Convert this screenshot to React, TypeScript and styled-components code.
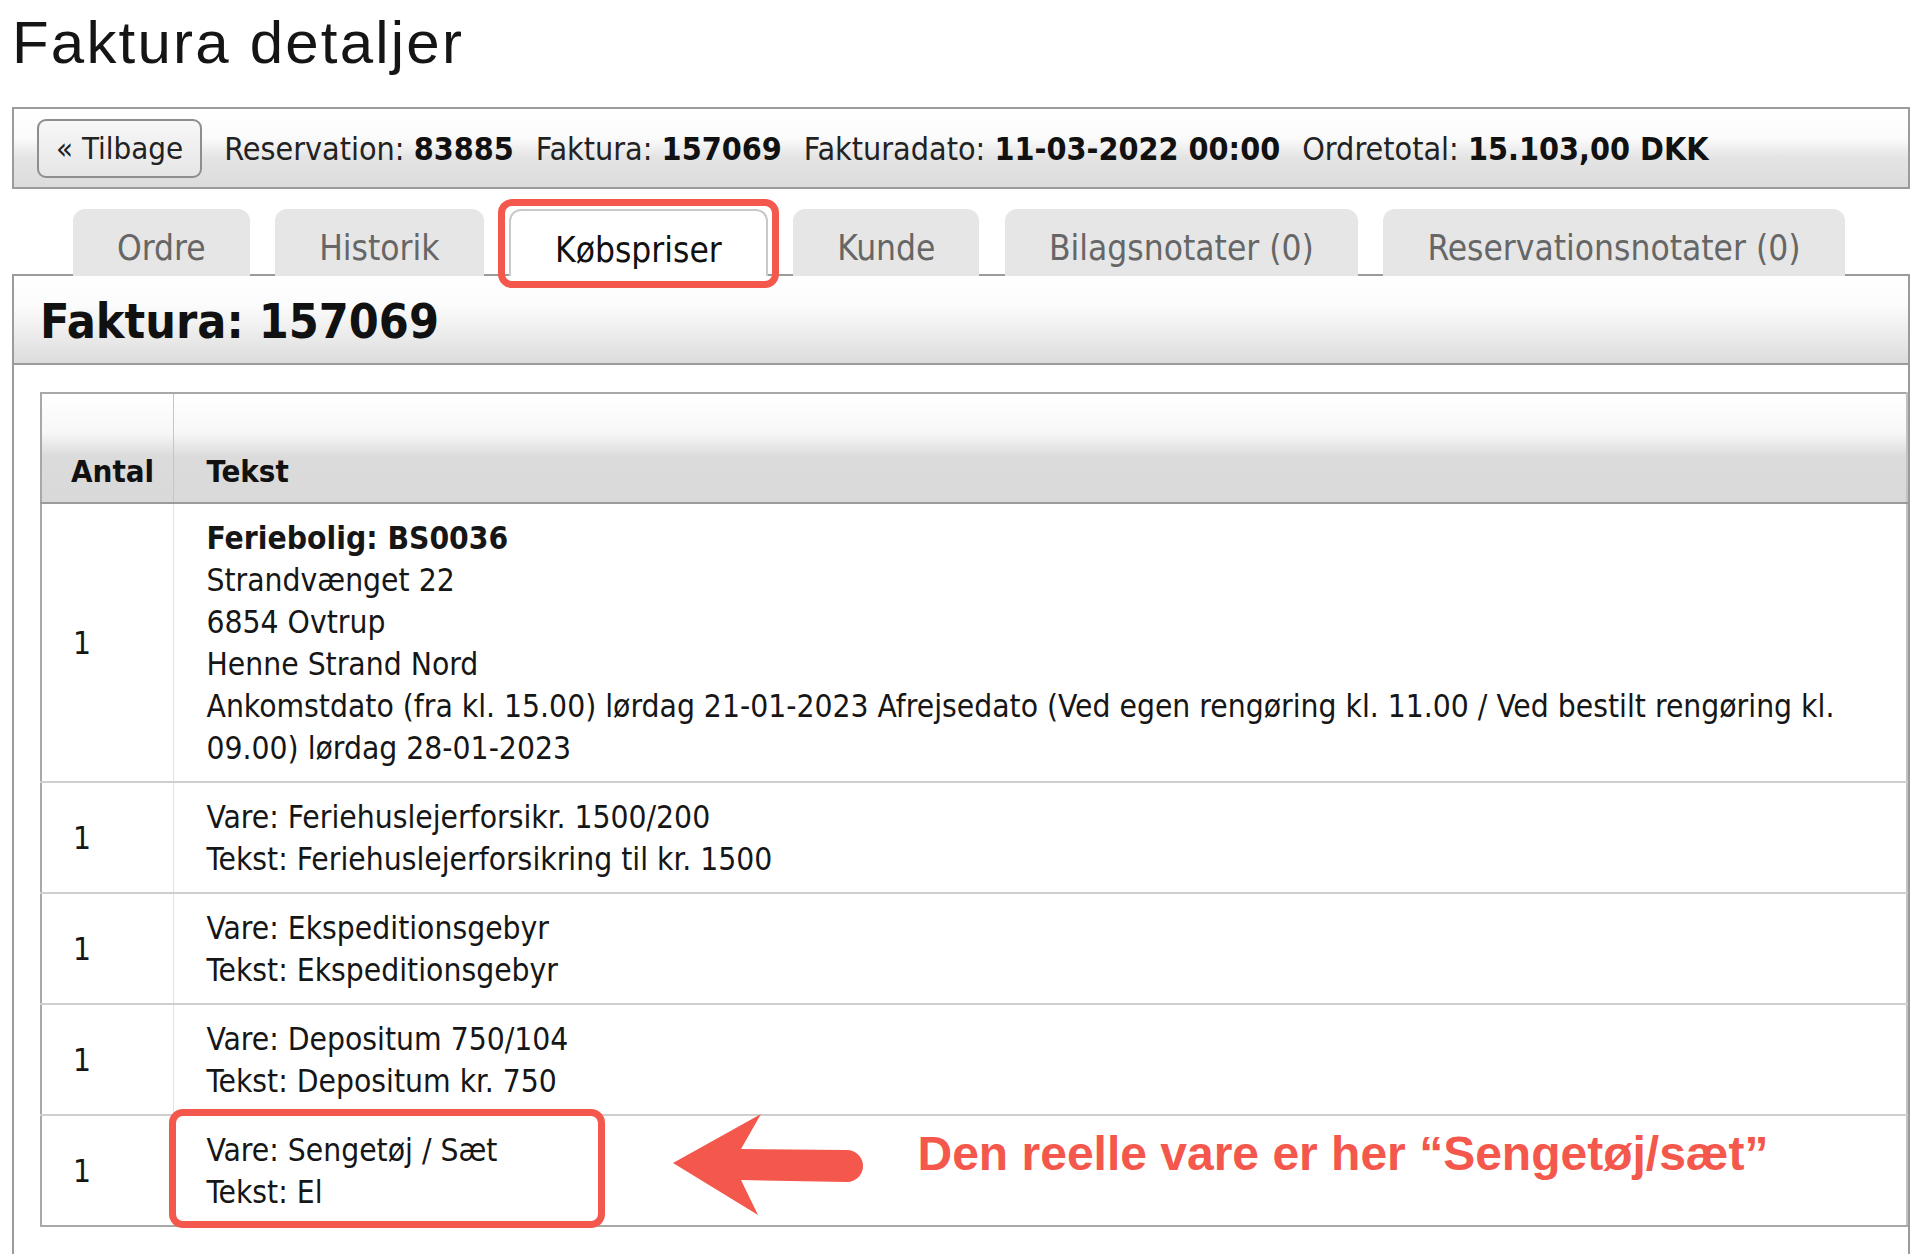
import React from "react";
import styled, { createGlobalStyle } from "styled-components";

const RED = "#f4574b";

const GlobalStyle = createGlobalStyle`
  html, body { margin: 0; padding: 0; background: #ffffff; }
  body {
    font-family: "DejaVu Sans Condensed", "DejaVu Sans", "Liberation Sans", sans-serif;
    font-stretch: condensed;
    color: #1c1c1c;
  }
  * { box-sizing: border-box; }
`;

const Page = styled.div`
  padding-left: 12px;
  min-height: 1254px;
  overflow: hidden;
`;

const Title = styled.h1`
  margin: 0;
  padding-top: 7px;
  font-family: "Liberation Sans", Arial, sans-serif;
  font-stretch: normal;
  font-weight: 400;
  font-size: 60px;
  line-height: 72px;
  letter-spacing: 2.2px;
  color: #151515;
`;

const InfoBar = styled.div`
  margin-top: 28px;
  height: 82px;
  border: 2px solid #9b9b9b;
  background: linear-gradient(#ffffff 0%, #fbfbfb 38%, #e4e4e4 62%, #dcdcdc 100%);
  display: flex;
  align-items: center;
  gap: 22px;
  padding-left: 23px;
  font-size: 32px;
  color: #222;
  white-space: nowrap;
`;

const BackButton = styled.button`
  height: 59px;
  padding: 0 17px;
  border: 2px solid #8e8e8e;
  border-radius: 9px;
  background: linear-gradient(#f7f7f7, #e6e6e6);
  font-family: inherit;
  font-stretch: condensed;
  font-size: 31px;
  color: #222;
  cursor: pointer;
`;

const InfoItem = styled.span`
  padding-top: 2px;
  b { font-weight: 700; color: #111; }
`;

const TabRow = styled.div`
  margin-top: 20px;
  margin-bottom: -2px;
  padding-left: 61px;
  display: flex;
  align-items: flex-end;
  gap: 25.5px;
  position: relative;
  z-index: 1;
`;

const Tab = styled.div<{ $active?: boolean }>`
  position: relative;
  height: 67px;
  padding: 18px 44px 0;
  line-height: 42px;
  font-size: 35px;
  border-radius: 12px 12px 0 0;
  white-space: nowrap;
  background: ${(p) => (p.$active ? "#ffffff" : "#e6e6e6")};
  color: ${(p) => (p.$active ? "#111" : "#666")};
  border: ${(p) => (p.$active ? "2px solid #c9c9c9" : "none")};
  border-bottom: none;
`;

const TabOutline = styled.span`
  position: absolute;
  top: -12px;
  left: -13px;
  right: -13px;
  bottom: -12px;
  border: 7px solid ${RED};
  border-radius: 14px;
  pointer-events: none;
`;

const ContentBox = styled.div`
  border: 2px solid #9b9b9b;
  border-bottom: none;
  min-height: 990px;
`;

const Band = styled.div`
  height: 89px;
  border-bottom: 2px solid #9b9b9b;
  background: linear-gradient(#ffffff 0%, #fbfbfb 35%, #e8e8e8 75%, #dcdcdc 100%);
  padding: 4px 0 0 26px;
  font-size: 48px;
  line-height: 83px;
  font-weight: 700;
  color: #111;
`;

const TableWrap = styled.div`
  margin: 27px 0 0 26px;
`;

const Table = styled.table`
  width: 100%;
  border-collapse: collapse;
  border: 2px solid #a8a8a8;
  border-right-color: #c2c2c2;
`;

const HeadCell = styled.th<{ $first?: boolean }>`
  height: 110px;
  vertical-align: bottom;
  text-align: left;
  font-size: 31px;
  line-height: 36px;
  font-weight: 700;
  color: #111;
  padding: 0 0 13px ${(p) => (p.$first ? "29px" : "33px")};
  width: ${(p) => (p.$first ? "132px" : "auto")};
  border-bottom: 2px solid #9b9b9b;
  border-right: ${(p) => (p.$first ? "1px solid #c6c6c6" : "none")};
  background: linear-gradient(#ffffff 0%, #f7f7f7 36%, #dbdbdb 58%, #d9d9d9 100%);
`;

const Row = styled.tr`
  & + & td { border-top: 2px solid #cfcfcf; }
`;

const Cell = styled.td<{ $first?: boolean }>`
  position: relative;
  vertical-align: middle;
  font-size: 31.5px;
  line-height: 42px;
  color: #161616;
  padding: 13px 20px 12px ${(p) => (p.$first ? "31px" : "33px")};
  border-right: ${(p) => (p.$first ? "1px solid #e2e2e2" : "none")};
`;

const Line = styled.div<{ $bold?: boolean }>`
  font-weight: ${(p) => (p.$bold ? 700 : 400)};
`;

const Highlight = styled.span`
  position: absolute;
  left: -5px;
  top: -7px;
  width: 436px;
  height: 119px;
  border: 7px solid ${RED};
  border-radius: 14px;
  pointer-events: none;
`;

const Arrow = styled.svg`
  position: absolute;
  left: 498px;
  top: -5px;
`;

const Note = styled.span`
  position: absolute;
  left: 744px;
  top: 14px;
  font-family: "Liberation Sans", Arial, sans-serif;
  font-stretch: normal;
  font-weight: 700;
  font-size: 48px;
  line-height: 48px;
  color: ${RED};
  white-space: nowrap;
`;

type Item = { lines: { text: string; bold?: boolean }[]; highlight?: boolean };

const rows: Item[] = [
  {
    lines: [
      { text: "Feriebolig: BS0036", bold: true },
      { text: "Strandvænget 22" },
      { text: "6854 Ovtrup" },
      { text: "Henne Strand Nord" },
      {
        text:
          "Ankomstdato (fra kl. 15.00) lørdag 21-01-2023 Afrejsedato (Ved egen rengøring kl. 11.00 / Ved bestilt rengøring kl. 09.00) lørdag 28-01-2023",
      },
    ],
  },
  {
    lines: [
      { text: "Vare: Feriehuslejerforsikr. 1500/200" },
      { text: "Tekst: Feriehuslejerforsikring til kr. 1500" },
    ],
  },
  {
    lines: [{ text: "Vare: Ekspeditionsgebyr" }, { text: "Tekst: Ekspeditionsgebyr" }],
  },
  {
    lines: [{ text: "Vare: Depositum 750/104" }, { text: "Tekst: Depositum kr. 750" }],
  },
  {
    lines: [{ text: "Vare: Sengetøj / Sæt" }, { text: "Tekst: El" }],
    highlight: true,
  },
];

const tabs = ["Ordre", "Historik", "Købspriser", "Kunde", "Bilagsnotater (0)", "Reservationsnotater (0)"];

export default function App() {
  return (
    <>
      <GlobalStyle />
      <Page>
        <Title>Faktura detaljer</Title>
        <InfoBar>
          <BackButton>« Tilbage</BackButton>
          <InfoItem>
            Reservation: <b>83885</b>
          </InfoItem>
          <InfoItem>
            Faktura: <b>157069</b>
          </InfoItem>
          <InfoItem>
            Fakturadato: <b>11-03-2022 00:00</b>
          </InfoItem>
          <InfoItem>
            Ordretotal: <b>15.103,00 DKK</b>
          </InfoItem>
        </InfoBar>
        <TabRow>
          {tabs.map((t) => (
            <Tab key={t} $active={t === "Købspriser"}>
              {t}
              {t === "Købspriser" && <TabOutline />}
            </Tab>
          ))}
        </TabRow>
        <ContentBox>
          <Band>Faktura: 157069</Band>
          <TableWrap>
            <Table>
              <thead>
                <tr>
                  <HeadCell $first>Antal</HeadCell>
                  <HeadCell>Tekst</HeadCell>
                </tr>
              </thead>
              <tbody>
                {rows.map((r, i) => (
                  <Row key={i}>
                    <Cell $first>1</Cell>
                    <Cell>
                      {r.lines.map((l, j) => (
                        <Line key={j} $bold={l.bold}>
                          {l.text}
                        </Line>
                      ))}
                      {r.highlight && (
                        <>
                          <Highlight />
                          <Arrow width="194" height="106" viewBox="0 0 194 106">
                            <path
                              d="M1 52 L89 3 L69 38 L175 39 A16 16 0 0 1 175 71 L69 69 L86 104 Z"
                              fill={RED}
                            />
                          </Arrow>
                          <Note>Den reelle vare er her “Sengetøj/sæt”</Note>
                        </>
                      )}
                    </Cell>
                  </Row>
                ))}
              </tbody>
            </Table>
          </TableWrap>
        </ContentBox>
      </Page>
    </>
  );
}
